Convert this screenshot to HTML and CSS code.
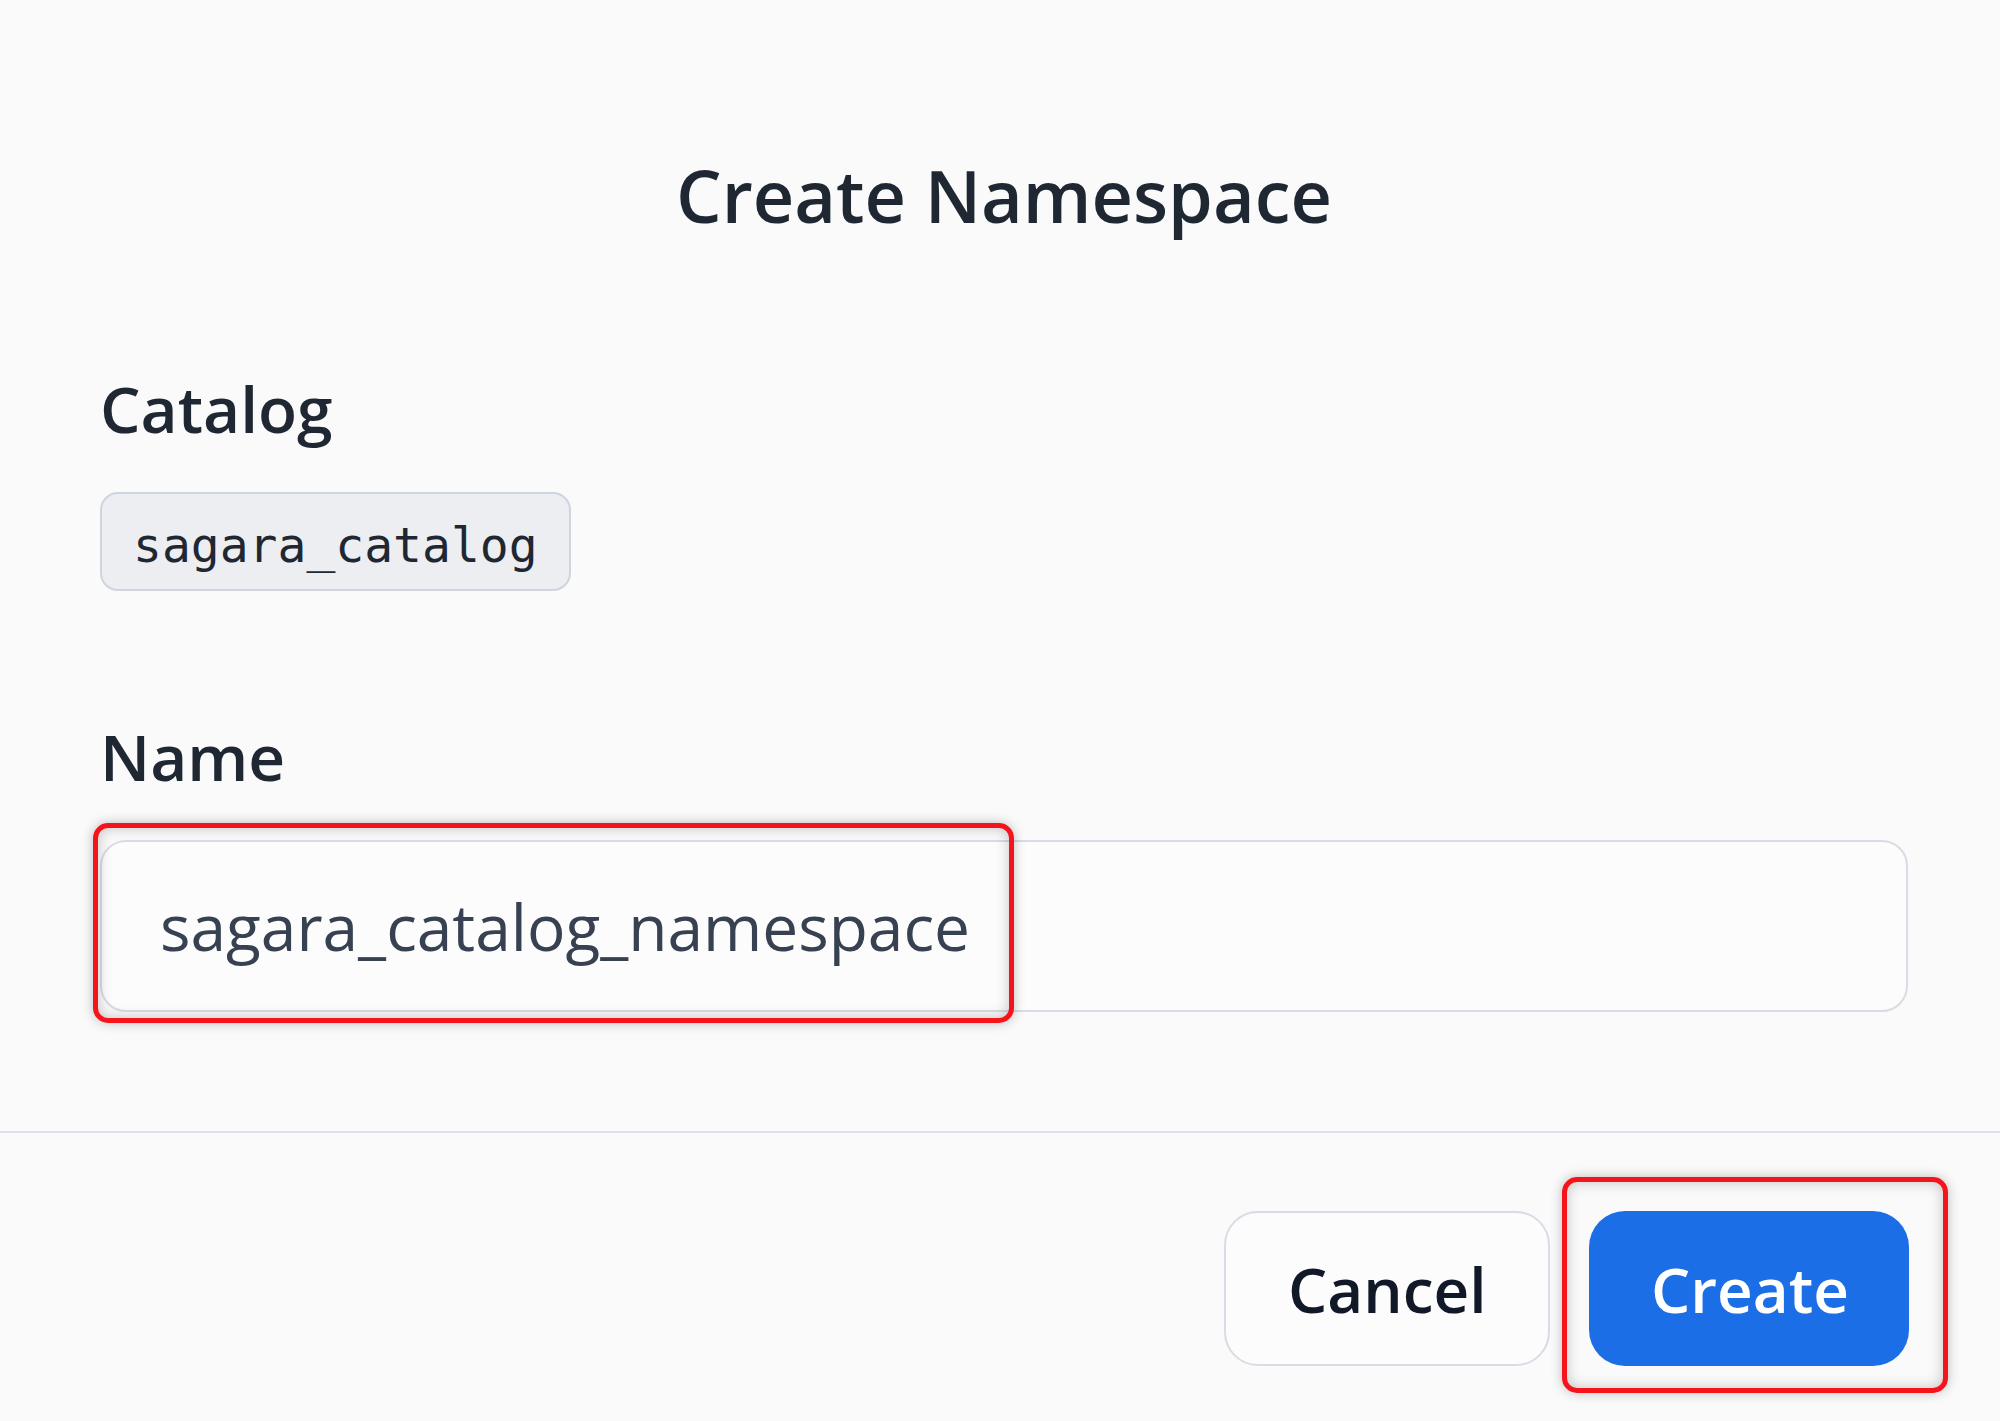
FILE: index.html
```html
<!DOCTYPE html>
<html lang="en">
<head>
  <meta charset="UTF-8">
  <meta name="viewport" content="width=device-width, initial-scale=1.0">
  <title>Create Namespace</title>
  <link rel="stylesheet" href="styles.css">
</head>
<body>
  <div class="modal">
    <h2 class="modal-title">Create Namespace</h2>

    <div class="modal-body">
      <div class="field">
        <label class="field-label">Catalog</label>
        <code class="catalog-chip">sagara_catalog</code>
      </div>

      <div class="field">
        <label class="field-label" for="ns-name">Name</label>
        <div class="input-wrap">
          <input id="ns-name" class="text-input" type="text" value="sagara_catalog_namespace">
          <!-- annotation box -->
          <span class="mark mark-input"></span>
        </div>
      </div>
    </div>

    <div class="modal-footer">
      <button class="btn btn-cancel">Cancel</button>
      <div class="btn-wrap">
        <button class="btn btn-create">Create</button>
        <span class="mark mark-create"></span>
      </div>
    </div>
  </div>
</body>
</html>
```

FILE: styles.css
```css
* {
  box-sizing: border-box;
}

body {
  margin: 0;
  background-color: #fafafa;
  font-family: "Open Sans", "Noto Sans", sans-serif;
  color: #1f2733;
}

.modal {
  min-height: 100vh;
}

.modal-title {
  margin: 0;
  padding-top: 151px;
  padding-left: 8px;
  font-size: 72px;
  line-height: 88px;
  font-weight: 600;
  text-align: center;
  color: #1f2733;
}

.modal-body {
  padding: 132px 92px 119px 100px;
}

.field {
  display: flex;
  flex-direction: column;
  align-items: flex-start;
}

.field + .field {
  margin-top: 128px;
}

.field-label {
  display: block;
  font-size: 64px;
  line-height: 76px;
  font-weight: 600;
  color: #1f2733;
  margin-bottom: 45px;
}

.catalog-chip {
  display: inline-block;
  font-family: "DejaVu Sans Mono", "Liberation Mono", monospace;
  font-size: 48px;
  line-height: 59px;
  padding: 22px 31px 14px;
  background-color: #eceef2;
  border: 2px solid #cfd5df;
  border-radius: 18px;
  color: #1f2733;
}

.input-wrap {
  position: relative;
  width: 100%;
}

.text-input {
  display: block;
  width: 100%;
  height: 172px;
  padding: 0 58px;
  font-family: "Open Sans", "Noto Sans", sans-serif;
  font-size: 64px;
  color: #374151;
  background-color: #fcfcfc;
  border: 2px solid #d8dce5;
  border-radius: 26px;
  outline: none;
}

.modal-footer {
  border-top: 2px solid #dde1ea;
  padding: 78px 91px 0 100px;
  display: flex;
  justify-content: flex-end;
  align-items: center;
  gap: 39px;
}

.btn {
  height: 155px;
  padding: 0 62px;
  font-family: "Open Sans", "Noto Sans", sans-serif;
  font-size: 62px;
  font-weight: 600;
  border-radius: 34px;
  cursor: pointer;
}

.btn-cancel {
  width: 326px;
  background-color: #fcfcfd;
  color: #111827;
  border: 2px solid #d8dce5;
}

.btn-wrap {
  position: relative;
}

.btn-create {
  display: block;
  width: 320px;
  background-color: #1c6ee6;
  color: #fff;
  border: none;
  border-radius: 36px;
}

/* red annotation boxes */
.mark {
  position: absolute;
  border: 5px solid #f5141b;
  border-radius: 15px;
  box-shadow: 0 0 12px rgba(0, 0, 0, 0.25), inset 0 0 14px rgba(0, 0, 0, 0.22);
  pointer-events: none;
}

.mark-input {
  left: -7px;
  top: -17px;
  width: 921px;
  height: 200px;
}

.mark-create {
  left: -27px;
  top: -34px;
  width: 386px;
  height: 216px;
}
```
